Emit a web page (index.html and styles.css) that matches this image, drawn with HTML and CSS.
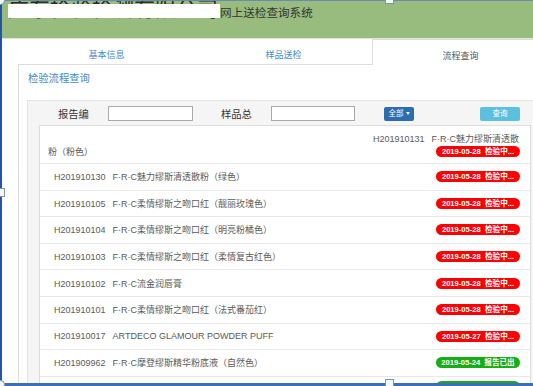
FILE: index.html
```html
<!DOCTYPE html>
<html>
  <head>
    <meta charset="utf-8">
    <meta name="viewport" content="width=device-width, initial-scale=1">
    <link rel="stylesheet" href="styles.css">
  </head>

  <body>
    <div class="shot">
      <div class="frame">
        <!-- cabeçalho verde -->
        <header class="top">
          <span class="company">广东检验检测有限公司</span>
          <span class="mask"></span>
          <span class="sys">网上送检查询系统</span>
        </header>

        <div class="main">
          <ul class="tabs">
            <li class="tab">基本信息</li>
            <li class="tab">样品送检</li>
            <li class="tab active">流程查询</li>
          </ul>

          <div class="panel">
            <div class="panel-title">检验流程查询</div>
            <div class="panel-body">
              <div class="well">
                <div class="search">
                  <label class="lbl lbl-1">报告编</label>
                  <input type="text" class="field field-1">
                  <label class="lbl lbl-2">样品总</label>
                  <input type="text" class="field field-2">
                  <button type="button" class="btn btn-all">全部 <span class="caret"></span></button>
                  <button type="button" class="btn btn-query">查询</button>
                </div>

                <ul class="records">
                  <li class="rec rec-first">
                    <div class="rec-line1"><span class="rid">H201910131</span>F·R·C魅力缪斯清透散</div>
                    <div class="rec-line2">
                      <span>粉（粉色）</span>
                      <span class="badge red">2019-05-28&nbsp;&nbsp;检验中...</span>
                    </div>
                  </li>
                  <li class="rec"><span><span class="rid">H201910130</span>F·R·C魅力缪斯清透散粉（绿色）</span><span class="badge red">2019-05-28&nbsp;&nbsp;检验中...</span></li>
                  <li class="rec"><span><span class="rid">H201910105</span>F·R·C柔情缪斯之吻口红（靓丽玫瑰色）</span><span class="badge red">2019-05-28&nbsp;&nbsp;检验中...</span></li>
                  <li class="rec"><span><span class="rid">H201910104</span>F·R·C柔情缪斯之吻口红（明亮粉橘色）</span><span class="badge red">2019-05-28&nbsp;&nbsp;检验中...</span></li>
                  <li class="rec"><span><span class="rid">H201910103</span>F·R·C柔情缪斯之吻口红（柔情复古红色）</span><span class="badge red">2019-05-28&nbsp;&nbsp;检验中...</span></li>
                  <li class="rec"><span><span class="rid">H201910102</span>F·R·C流金润唇膏</span><span class="badge red">2019-05-28&nbsp;&nbsp;检验中...</span></li>
                  <li class="rec"><span><span class="rid">H201910101</span>F·R·C柔情缪斯之吻口红（法式番茄红）</span><span class="badge red">2019-05-28&nbsp;&nbsp;检验中...</span></li>
                  <li class="rec"><span><span class="rid">H201910017</span>ARTDECO GLAMOUR POWDER PUFF</span><span class="badge red">2019-05-27&nbsp;&nbsp;检验中...</span></li>
                  <li class="rec"><span><span class="rid">H201909962</span>F·R·C摩登缪斯精华粉底液（自然色）</span><span class="badge green">2019-05-24&nbsp;&nbsp;报告已出</span></li>
                  <li class="rec rec-cut"><span></span><span class="badge green"></span></li>
                </ul>
              </div>
            </div>
          </div>
        </div>
      </div>

      <!-- alças da moldura de seleção -->
      <span class="knob knob-tl"></span>
      <span class="knob knob-bl"></span>
      <span class="grip grip-top"></span>
      <span class="grip grip-left"></span>
      <span class="grip grip-bottom"></span>
    </div>
  </body>
</html>
```

FILE: styles.css
```css
html, body {
  margin: 0;
  padding: 0;
  background: #fff;
  overflow: hidden;
  font-family: "Liberation Sans", "Noto Sans CJK SC", sans-serif;
}

ul {
  list-style: none;
  margin: 0;
  padding: 0;
}

.shot {
  position: relative;
  width: 533px;
  height: 386px;
}

.frame {
  width: 533px;
  height: 386px;
  box-sizing: border-box;
  border-left: 2px solid #2456a4;
  border-top: 1px solid #6d8bb0;
  border-bottom: 3px solid #3c6eb5;
  overflow: hidden;
}

/* cabeçalho */
.top {
  position: relative;
  height: 37px;
  background-color: #98bc7e;
  border-bottom: 1px solid #dbe7d3;
  display: flex;
  align-items: flex-start;
  overflow: hidden;
}

.company {
  width: 212px;
  margin-left: 6px;
  margin-top: -5px;
  font-size: 21px;
  line-height: 25px;
  color: #2a2a2a;
  white-space: nowrap;
  overflow: hidden;
}

.mask {
  position: absolute;
  left: 6px;
  top: 3px;
  width: 212px;
  height: 14px;
  background: #fff;
}

.sys {
  margin-top: 5px;
  font-size: 11.6px;
  line-height: 14px;
  color: #333;
}

/* abas */
.main {
  padding-left: 16px;
  width: 560px;
}

.tabs {
  display: flex;
  height: 26px;
}

.tab {
  width: 177px;
  box-sizing: border-box;
  padding-top: 11px;
  font-size: 9px;
  line-height: 10px;
  text-align: center;
  color: #428bca;
  border-bottom: 1px solid #ddd;
}

.tab.active {
  color: #555;
  background: #fff;
  border: 1px solid #ddd;
  border-bottom: none;
}

/* painel */
.panel {
  border-left: 1px solid #ddd;
  border-right: 1px solid #ddd;
}

.panel-title {
  height: 27px;
  line-height: 27px;
  padding-left: 9px;
  font-size: 10.3px;
  color: #428bca;
}

.panel-body {
  padding: 8px;
}

.well {
  background: #f5f5f5;
  border: 1px solid #e3e3e3;
  height: 400px;
}

.search {
  height: 24px;
  display: flex;
  align-items: center;
  padding-top: 1px;
  box-sizing: border-box;
}

.lbl {
  width: 50px;
  font-size: 10.3px;
  color: #333;
}

.lbl-1 { margin-left: 30px; }
.lbl-2 { margin-left: 28px; }

.field {
  height: 15px;
  box-sizing: border-box;
  border: 1px solid #a9a9a9;
  background: #fff;
  padding: 0;
  margin: 0;
}

.field-1 { width: 85px; }
.field-2 { width: 84px; }

.btn {
  height: 14px;
  border: none;
  border-radius: 2px;
  padding: 0;
  color: #fff;
  font-family: "Liberation Sans", "Noto Sans CJK SC", sans-serif;
  font-size: 7.5px;
  line-height: 14px;
}

.btn-all {
  width: 30px;
  margin-left: 29px;
  background: #2d6cad;
}

.btn-query {
  width: 40px;
  margin-left: 66px;
  background: #5bc0de;
}

.caret {
  display: inline-block;
  width: 0;
  height: 0;
  vertical-align: middle;
  border-left: 2.5px solid transparent;
  border-right: 2.5px solid transparent;
  border-top: 3px solid #fff;
}

/* lista de registros */
.records {
  margin-left: 11px;
  width: 490px;
  border: 1px solid #ddd;
  background: #fff;
}

.rec {
  height: 26.6px;
  box-sizing: border-box;
  border-bottom: 1px solid #e8e8e8;
  padding: 0 10px 0 14px;
  display: flex;
  align-items: center;
  justify-content: space-between;
  font-size: 9px;
  color: #5a5a5a;
  white-space: nowrap;
}

.rec-first {
  height: 38px;
  display: block;
  padding: 7px 10px 0 8px;
}

.rec-line1 {
  text-align: right;
  line-height: 12px;
  padding-right: 1px;
}

.rec-line2 {
  display: flex;
  justify-content: space-between;
  align-items: center;
  height: 13px;
}

.rid {
  margin-right: 7px;
}

.badge {
  width: 84px;
  height: 11px;
  line-height: 11px;
  border-radius: 6px;
  color: #fff;
  font-weight: bold;
  font-size: 7.6px;
  text-align: center;
}

.badge.red { background: #ff0000; }
.badge.green { background: #16ad16; }

/* última linha, cortada pela moldura */
.rec-cut {
  align-items: flex-start;
  padding-top: 4px;
}

/* alças */
.knob {
  position: absolute;
  width: 7px;
  height: 7px;
  border-radius: 50%;
  background: #f4f6f9;
  border: 1px solid #7d93b0;
}

.knob-tl { left: -4px; top: -4px; }
.knob-bl { left: -4px; top: 380px; }

.grip {
  position: absolute;
  width: 7px;
  height: 7px;
  background: #f4f6f9;
  border: 1px solid #7d93b0;
}

.grip-top { left: 385px; top: -5px; }
.grip-left { left: -4px; top: 188px; }
.grip-bottom { left: 385px; top: 379px; }
```
